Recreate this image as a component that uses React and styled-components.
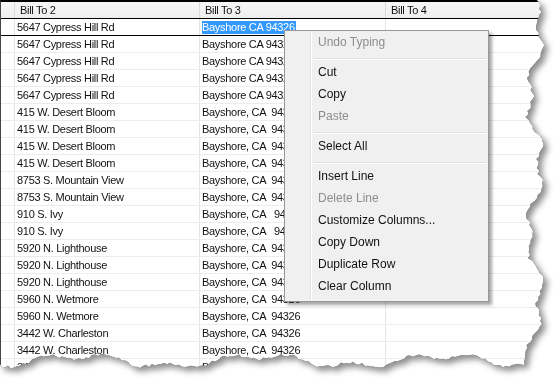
import React from 'react';
import styled, { createGlobalStyle } from 'styled-components';

const GlobalStyle = createGlobalStyle`
  html, body {
    margin: 0;
    padding: 0;
    background: #fff;
  }
  body {
    width: 556px;
    height: 379px;
    overflow: hidden;
  }
`;

// deterministic jitter for the torn paper edge
function rng(seed) {
  let s = seed;
  return () => {
    s = (s * 16807) % 2147483647;
    return (s - 1) / 2147483646;
  };
}

function tornClip() {
  const r = rng(11);
  const pts = ['0px 0px'];
  for (let y = 0; y <= 352; y += 3) {
    const x = 535 + 6 * Math.sin(y / 21) + 4 * Math.sin(y / 7.3 + 1) + (r() - 0.5) * 3.5;
    pts.push(`${x.toFixed(1)}px ${y}px`);
  }
  for (let x = 524; x >= 0; x -= 3) {
    const y = 361 + 5 * Math.sin(x / 29 + 2) + 3 * Math.sin(x / 9.7) + (r() - 0.5) * 3;
    pts.push(`${x}px ${y.toFixed(1)}px`);
  }
  pts.push('0px 364px');
  return `polygon(${pts.join(',')})`;
}

const Shadow = styled.div`
  width: 556px;
  height: 379px;
  filter: drop-shadow(0 0 0.7px rgba(0, 0, 0, 0.95)) drop-shadow(4px 4px 3px rgba(0, 0, 0, 0.45));
`;

const Sheet = styled.div`
  position: relative;
  width: 556px;
  height: 379px;
  background: #fff;
  border-top: 2px solid #000;
  border-left: 1px solid #444;
  box-sizing: border-box;
  overflow: hidden;
  font-family: "Liberation Sans", Arial, sans-serif;
  font-size: 11px;
  letter-spacing: -0.3px;
  color: #111;
`;

const cols = '14px 185px 186px 1fr';

const Header = styled.div`
  display: grid;
  grid-template-columns: ${cols};
  height: 16px;
  background: linear-gradient(#f7f7f7, #eeeeee);
  border-bottom: 1px solid #000;
`;

const HeadCell = styled.div`
  padding-left: 5px;
  line-height: 16px;
  white-space: nowrap;
  border-right: 1px solid #dadada;
`;

const Row = styled.div`
  display: grid;
  grid-template-columns: ${cols};
  height: 16px;
  border-bottom: 1px solid ${(p) => (p.$current ? '#000' : '#ececec')};
`;

const Cell = styled.div`
  padding-left: 2px;
  line-height: 16px;
  white-space: pre;
  overflow: hidden;
  border-right: 1px solid #e4e4e4;
`;

const Selected = styled.span`
  display: inline-block;
  background: #3399ff;
  color: #fff;
  line-height: 13px;
  padding-right: 1px;
`;

const Menu = styled.div`
  position: absolute;
  left: 283px;
  top: 28px;
  width: 199px;
  padding: 2px;
  border: 1px solid #979797;
  background: linear-gradient(
    to right,
    #f0f0f0 25px,
    #e2e3e3 25px,
    #e2e3e3 26px,
    #ffffff 26px,
    #ffffff 27px,
    #f0f0f0 27px
  );
  box-shadow: 3px 3px 3px rgba(0, 0, 0, 0.35);
  font-family: "Liberation Sans", Arial, sans-serif;
  font-size: 12px;
  letter-spacing: 0;
`;

const Item = styled.div`
  height: 22px;
  line-height: 19px;
  padding-left: 31px;
  color: ${(p) => (p.$disabled ? '#8d8d8d' : '#111')};
  white-space: nowrap;
`;

const Separator = styled.div`
  height: 8px;
  margin-left: 27px;
  display: flex;
  flex-direction: column;
  justify-content: center;
  &::before {
    content: '';
    height: 1px;
    background: #e0e0e0;
  }
  &::after {
    content: '';
    height: 1px;
    background: #fff;
  }
`;

const rows = [
  ['5647 Cypress Hill Rd', 'Bayshore CA 94326'],
  ['5647 Cypress Hill Rd', 'Bayshore CA 94326'],
  ['5647 Cypress Hill Rd', 'Bayshore CA 94326'],
  ['5647 Cypress Hill Rd', 'Bayshore CA 94326'],
  ['5647 Cypress Hill Rd', 'Bayshore CA 94326'],
  ['415 W. Desert Bloom', 'Bayshore, CA  94326'],
  ['415 W. Desert Bloom', 'Bayshore, CA  94326'],
  ['415 W. Desert Bloom', 'Bayshore, CA  94326'],
  ['415 W. Desert Bloom', 'Bayshore, CA  94326'],
  ['8753 S. Mountain View', 'Bayshore, CA  94326'],
  ['8753 S. Mountain View', 'Bayshore, CA  94326'],
  ['910 S. Ivy', 'Bayshore, CA   94326'],
  ['910 S. Ivy', 'Bayshore, CA   94326'],
  ['5920 N. Lighthouse', 'Bayshore, CA  94326'],
  ['5920 N. Lighthouse', 'Bayshore, CA  94326'],
  ['5920 N. Lighthouse', 'Bayshore, CA  94326'],
  ['5960 N. Wetmore', 'Bayshore, CA  94326'],
  ['5960 N. Wetmore', 'Bayshore, CA  94326'],
  ['3442 W. Charleston', 'Bayshore, CA  94326'],
  ['3442 W. Charleston', 'Bayshore, CA  94326'],
  ['3442 W. Charleston', 'Bayshore, CA 94326'],
];

const menu = [
  { label: 'Undo Typing', disabled: true },
  'sep',
  { label: 'Cut' },
  { label: 'Copy' },
  { label: 'Paste', disabled: true },
  'sep',
  { label: 'Select All' },
  'sep',
  { label: 'Insert Line' },
  { label: 'Delete Line', disabled: true },
  { label: 'Customize Columns...' },
  { label: 'Copy Down' },
  { label: 'Duplicate Row' },
  { label: 'Clear Column' },
];

export default function App() {
  const clip = tornClip();
  return (
    <>
      <GlobalStyle />
      <Shadow>
        <Sheet style={{ clipPath: clip }}>
          <Header>
            <HeadCell />
            <HeadCell>Bill To 2</HeadCell>
            <HeadCell>Bill To 3</HeadCell>
            <HeadCell>Bill To 4</HeadCell>
          </Header>
          {rows.map(([a, b], i) => (
            <Row key={i} $current={i === 0}>
              <Cell />
              <Cell>{a}</Cell>
              <Cell>{i === 0 ? <Selected>{b}</Selected> : b}</Cell>
              <Cell />
            </Row>
          ))}
          <Menu>
            {menu.map((m, i) =>
              m === 'sep' ? (
                <Separator key={i} />
              ) : (
                <Item key={i} $disabled={m.disabled}>
                  {m.label}
                </Item>
              )
            )}
          </Menu>
        </Sheet>
      </Shadow>
    </>
  );
}
